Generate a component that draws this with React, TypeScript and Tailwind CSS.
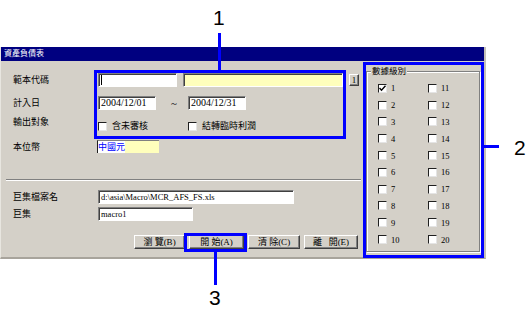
import React from "react";

const sunken =
  "border border-t-[#808080] border-l-[#808080] border-b-white border-r-white shadow-[inset_1px_1px_#404040]";
const raised =
  "border border-t-white border-l-white border-b-[#404040] border-r-[#404040] shadow-[inset_-1px_-1px_#808080]";
const yellow = "bg-[#ffffbc]";

function Check({ checked }: { checked?: boolean }) {
  return (
    <span className="w-[9px] h-[9px] shrink-0 bg-white border border-t-[#202020] border-l-[#202020] border-r-[#e4e4e4] border-b-[#e4e4e4] flex items-center justify-center">
      {checked && (
        <svg width="7" height="7" viewBox="0 0 7 7">
          <path d="M0.5 3 L2.5 5.2 L6.5 0.8" stroke="#000" strokeWidth="1.4" fill="none" />
        </svg>
      )}
    </span>
  );
}

function Label({ children }: { children: React.ReactNode }) {
  return <div className="w-[97px] pl-[12px] shrink-0 text-[9px] leading-[14px]">{children}</div>;
}

export default function App() {
  const nums = Array.from({ length: 20 }, (_, i) => i + 1);
  return (
    <div className="relative w-[530px] h-[316px] bg-white overflow-hidden font-['Liberation_Serif','Noto_Sans_CJK_TC',serif] text-black">
      <div className="pt-[47px]">
        <div className="w-[486px] h-[212px] bg-[#d4d0c8] border-r-2 border-b-2 border-r-[#c4c0b8] border-b-[#a8a49c] border-l border-l-[#e8e6e0] flex flex-col">
          <div className="h-[14px] bg-[#000080] text-white text-[8px] leading-[14px] pl-[3px] shrink-0">資產負債表</div>
          <div className="flex flex-1">
            {/* left panel */}
            <div className="w-[365px] flex flex-col pt-[12px]">
              <div className="flex items-center h-[14px]">
                <Label>範本代碼</Label>
                <div className={`w-[79px] h-[14px] bg-white ${sunken} flex items-center pl-[2px]`}>
                  <span className="w-px h-[10px] bg-black" />
                </div>
                <div className={`ml-[6px] w-[160px] h-[14px] ${yellow} ${sunken}`} />
                <div className={`ml-[6px] w-[10px] h-[12px] ${raised} text-[9px] leading-[10px] flex items-center justify-center`}>1</div>
              </div>
              <div className="flex items-center h-[14px] mt-[9px]">
                <Label>計入日</Label>
                <div className={`w-[58px] h-[14px] bg-white ${sunken} text-[10px] leading-[12px] pl-[2px]`}>2004/12/01</div>
                <span className="ml-[15px] w-[17px] text-[11px] leading-[14px]">~</span>
                <div className={`w-[58px] h-[14px] bg-white ${sunken} text-[10px] leading-[12px] pl-[2px]`}>2004/12/31</div>
              </div>
              <div className="flex items-start mt-[5px]">
                <Label>輸出對象</Label>
                <div className="flex items-center h-[14px] mt-[4px]">
                  <Check />
                  <span className="ml-[5px] w-[76px] text-[9px] leading-[14px]">含未審核</span>
                  <Check />
                  <span className="ml-[5px] text-[9px] leading-[14px]">結轉臨時利潤</span>
                </div>
              </div>
              <div className="flex items-center h-[13px] mt-[7px]">
                <Label>本位幣</Label>
                <div className={`-ml-[1px] w-[62px] h-[13px] ${yellow} border-l border-t border-l-[#202020] border-t-[#808080] text-[9px] leading-[12px] flex`}>
                  <span className="bg-white text-[#0000ff]">中國元</span>
                </div>
              </div>
              <div className="mt-[26px] ml-[5px] w-[355px] h-[2px] border-t border-t-[#808080] border-b border-b-white" />
              <div className="flex items-center h-[14px] mt-[9px]">
                <Label>巨集檔案名</Label>
                <div className={`w-[196px] h-[14px] bg-white ${sunken} text-[8.5px] leading-[12px] pl-[2px]`}>d:\asia\Macro\MCR_AFS_FS.xls</div>
              </div>
              <div className="flex items-center h-[14px] mt-[3px]">
                <Label>巨集</Label>
                <div className={`w-[95px] h-[14px] bg-white ${sunken} text-[8.5px] leading-[12px] pl-[2px]`}>macro1</div>
              </div>
              <div className="flex pl-[133px] gap-[4px] mt-[14px]">
                <div className={`w-[51px] h-[14px] ${raised} text-[9px] leading-[12px] text-center`}>瀏&nbsp;覽(B)</div>
                <div className={`w-[55px] h-[14px] ${raised} text-[9px] leading-[12px] text-center`}>開&nbsp;始(A)</div>
                <div className={`w-[52px] h-[14px] ${raised} text-[9px] leading-[12px] text-center`}>清&nbsp;除(C)</div>
                <div className={`w-[54px] h-[14px] ${raised} text-[9px] leading-[12px] text-center`}>離&nbsp;&nbsp;&nbsp;開(E)</div>
              </div>
            </div>
            {/* right panel */}
            <div className="pt-[10px]">
              <div className="relative w-[114px] h-[181px] border border-[#808080] shadow-[1px_1px_#fff,inset_1px_1px_#fff]">
                <span className="absolute -top-[7px] left-[4px] bg-[#d4d0c8] px-[1px] text-[8.5px] leading-[12px]">數據級別</span>
                <div className="grid grid-cols-[50px_50px] grid-rows-[repeat(10,16.8px)] grid-flow-col pt-[8px] pl-[11px]">
                  {nums.map((n) => (
                    <div key={n} className="flex items-center">
                      <Check checked={n === 1} />
                      <span className="ml-[4px] text-[8.5px] leading-[12px]">{n}</span>
                    </div>
                  ))}
                </div>
              </div>
            </div>
          </div>
        </div>
      </div>

      {/* annotations */}
      <div className="absolute left-[94px] top-[70px] w-[252px] h-[69px] border-[3px] border-[#0000ff]" />
      <div className="absolute left-[218px] top-[33px] w-[3px] h-[38px] bg-[#0000ff]" />
      <div className="absolute left-[213px] top-[7px] font-['Liberation_Sans',sans-serif] text-[21px] leading-none">1</div>

      <div className="absolute left-[363px] top-[62px] w-[121px] h-[196px] border-[3px] border-[#0000ff]" />
      <div className="absolute left-[483px] top-[145px] w-[16px] h-[3px] bg-[#0000ff]" />
      <div className="absolute left-[514px] top-[137px] font-['Liberation_Sans',sans-serif] text-[21px] leading-none">2</div>

      <div className="absolute left-[184px] top-[233px] w-[63px] h-[19px] border-[3px] border-[#0000ff]" />
      <div className="absolute left-[214px] top-[251px] w-[3px] h-[34px] bg-[#0000ff]" />
      <div className="absolute left-[209px] top-[287px] font-['Liberation_Sans',sans-serif] text-[21px] leading-none">3</div>
    </div>
  );
}
